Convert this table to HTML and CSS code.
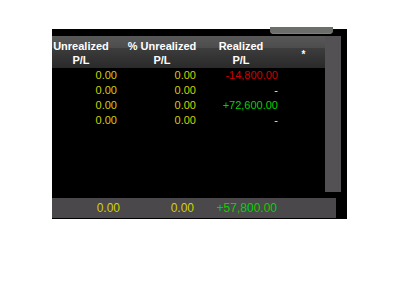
FILE: index.html
```html
<!DOCTYPE html>
<html>
<head>
<meta charset="utf-8">
<link rel="stylesheet" href="styles.css">
</head>
<body>
<div class="panel">
  <div class="tab-btn"></div>
  <div class="main">
    <div class="grid">
      <div class="head">
        <div class="hc c1">Unrealized<br>P/L</div>
        <div class="hc c2">% Unrealized<br>P/L</div>
        <div class="hc c3">Realized<br>P/L</div>
        <div class="hc c4"><span class="star">*</span></div>
      </div>
      <div class="row">
        <div class="v c1 yel">0.00</div>
        <div class="v c2 yel">0.00</div>
        <div class="v c3 red">-14,800.00</div>
        <div class="v c4"></div>
      </div>
      <div class="row">
        <div class="v c1 yel">0.00</div>
        <div class="v c2 yel">0.00</div>
        <div class="v c3 wht">-</div>
        <div class="v c4"></div>
      </div>
      <div class="row">
        <div class="v c1 yel">0.00</div>
        <div class="v c2 yel">0.00</div>
        <div class="v c3 grn">+72,600.00</div>
        <div class="v c4"></div>
      </div>
      <div class="row">
        <div class="v c1 yel">0.00</div>
        <div class="v c2 yel">0.00</div>
        <div class="v c3 wht">-</div>
        <div class="v c4"></div>
      </div>
    </div>
    <div class="scrollbar"></div>
  </div>
  <div class="footer">
    <div class="f c1 yel">0.00</div>
    <div class="f c2 yel">0.00</div>
    <div class="f c3 grn">+57,800.00</div>
  </div>
</div>
</body>
</html>
```

FILE: styles.css
```css
html, body {
  margin: 0;
  padding: 0;
  background: #ffffff;
}
body {
  font-family: "Liberation Sans", Arial, sans-serif;
}
.panel {
  position: relative;
  margin: 29px 0 0 52px;
  width: 295px;
  height: 190px;
  box-sizing: border-box;
  padding-top: 7px;
  background: #000000;
}
.tab-btn {
  position: absolute;
  left: 218px;
  top: -2px;
  width: 63px;
  height: 7px;
  border-radius: 0 0 4px 4px;
  background: #6c6e6b;
  box-shadow: inset 0 -1px 0 #7d807c;
}
.main {
  display: flex;
  height: 156px;
}
.grid {
  width: 273px;
}
.head {
  display: grid;
  grid-template-columns: 68px 80px 82px 43px;
  height: 32px;
  box-sizing: border-box;
  padding-top: 3px;
  background: linear-gradient(#585858 0, #4c4c4c 12px, #3d3d3d 12px, #333333 22px, #2a2a2a 32px);
  color: #ffffff;
  font-weight: bold;
  font-size: 11px;
  line-height: 14px;
  text-align: center;
  white-space: nowrap;
}
.hc.c1 { padding-right: 10px; overflow: hidden; }
.hc.c2 { padding-left: 4px; }
.hc.c4 { padding-top: 8px; }
.star { font-size: 10px; }
.row {
  display: grid;
  grid-template-columns: 68px 80px 82px 43px;
  height: 15px;
  font-size: 11px;
  line-height: 15px;
}
.v { text-align: right; }
.v.c1 { padding-right: 3px; }
.v.c2 { padding-right: 4px; }
.v.c3 { padding-right: 4px; }
.scrollbar {
  width: 16px;
  height: 156px;
  background: #535153;
}
.footer {
  display: grid;
  grid-template-columns: 68px 80px 82px;
  margin-top: 6px;
  width: 284px;
  height: 20px;
  background: #4a484a;
  font-size: 12px;
  line-height: 20px;
}
.f { text-align: right; }
.f.c1 { padding-right: 0; }
.f.c2 { padding-right: 6px; }
.f.c3 { padding-right: 5px; }
.yel { color: #d2d200; }
.red { color: #d00000; }
.grn { color: #00d400; }
.wht { color: #e8e8e8; }
```
